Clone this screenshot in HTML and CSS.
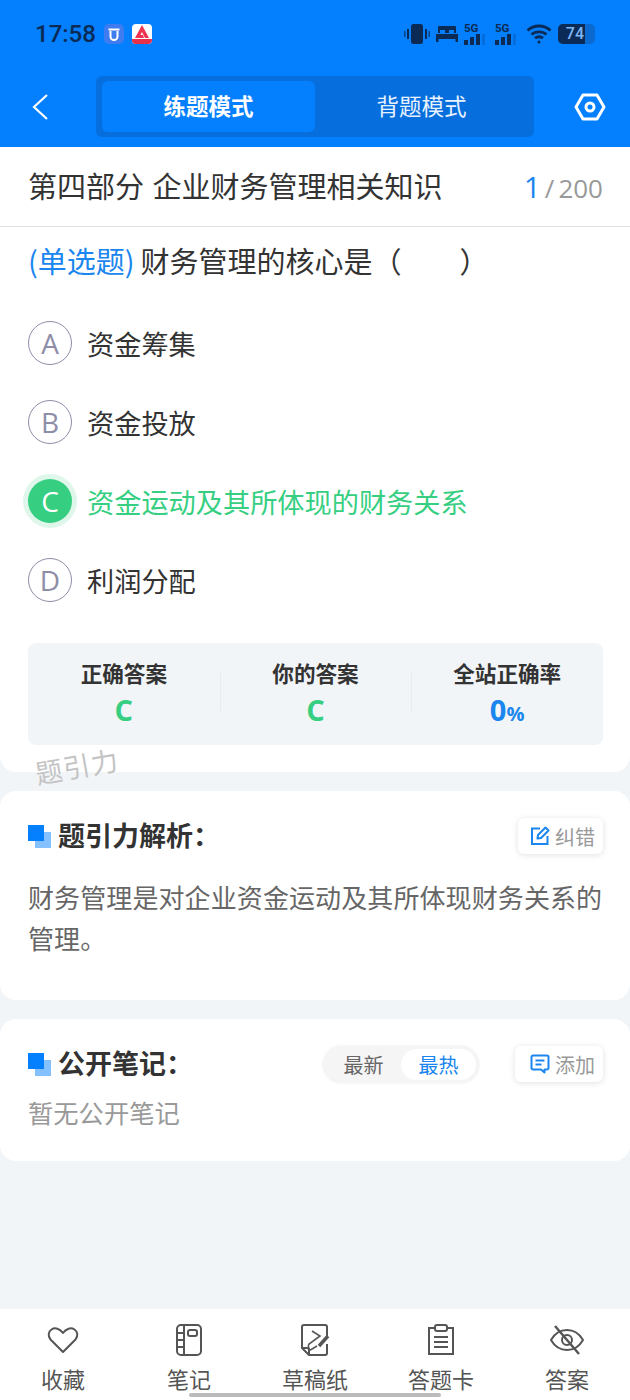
FILE: index.html
```html
<!DOCTYPE html>
<html lang="zh-CN">
<head>
  <meta charset="UTF-8">
  <meta name="viewport" content="width=device-width, initial-scale=1.0">
  <title>练题模式</title>
  <link rel="stylesheet" href="styles.css">
</head>
<body>
<div class="page">
  <!-- Status bar + mode switch -->
  <header class="top">
    <div class="status">
      <span class="time">17:58</span>
      <svg class="app-icon" width="20" height="20" viewBox="0 0 20 20"><rect width="20" height="20" rx="5" fill="#3f7cf0"/><path d="M6.500 7v5.500a3.500 3.500 0 0 0 7 0V7M4.500 5.500h11" fill="none" stroke="#fff" stroke-width="2"/></svg>
      <svg class="app-icon" width="20" height="20" viewBox="0 0 20 20"><rect width="20" height="20" rx="4" fill="#fff"/><path d="M0 15h20v1a4 4 0 0 1-4 4H4a4 4 0 0 1-4-4z" fill="#e8304a"/><path d="M3 14 10 1l7 13h-4l-3-6-1.500 3H11l1 3z" fill="#ee3450"/></svg>
      <div class="status-right">
        <svg width="26" height="20" viewBox="0 0 26 20" fill="#0b2a55"><rect x="7" y="0" width="12" height="20" rx="2.500"/><rect x="3" y="5" width="2" height="10"/><rect x="0" y="7" width="1.500" height="6" opacity=".7"/><rect x="21" y="5" width="2" height="10"/><rect x="24.500" y="7" width="1.500" height="6" opacity=".7"/></svg>
        <svg width="22" height="18" viewBox="0 0 22 18" fill="#0b2a55"><path d="M3 1h16a1 1 0 0 1 1 1v6h-2V5h-5v3H9V5H4v3H2V2a1 1 0 0 1 1-1zM0 9h22v8h-2.500v-3h-17v3H0z"/></svg>
        <div class="signal">
          <span class="net">5G</span>
          <svg width="24" height="11" viewBox="0 0 24 11"><rect x="0" y="6" width="4" height="5" fill="#0b2a55"/><rect x="6" y="3" width="4" height="8" fill="#0b2a55"/><rect x="12" y="0" width="4" height="11" fill="#0b2a55"/><rect x="18" y="0" width="3" height="11" fill="#0b2a55" opacity=".2"/></svg>
        </div>
        <div class="signal">
          <span class="net">5G</span>
          <svg width="24" height="11" viewBox="0 0 24 11"><rect x="0" y="6" width="4" height="5" fill="#0b2a55"/><rect x="6" y="3" width="4" height="8" fill="#0b2a55"/><rect x="12" y="0" width="4" height="11" fill="#0b2a55"/><rect x="18" y="0" width="3" height="11" fill="#0b2a55" opacity=".2"/></svg>
        </div>
        <svg width="26" height="20" viewBox="0 0 26 20" fill="none" stroke="#0b2a55" stroke-width="2.800"><path d="M1.500 6.500c6.500-6 16.500-6 23 0M5.500 10.500c4-3.500 11-3.500 15 0M9 14.200c2.300-1.700 5.700-1.700 8 0"/><circle cx="13" cy="18" r="1.500" fill="#0b2a55" stroke="none"/></svg>
        <div class="battery"><span class="battery-fill">74</span></div>
      </div>
    </div>
    <div class="nav">
      <svg class="back" width="16" height="28" viewBox="0 0 16 28" fill="none" stroke="#fff" stroke-width="2.200"><path d="M15 2 2 14l13 12"/></svg>
      <div class="modes">
        <div class="mode mode-on">练题模式</div>
        <div class="mode">背题模式</div>
      </div>
      <svg class="gear" width="32" height="28" viewBox="0 0 32 28" fill="none" stroke="#fff" stroke-width="3"><path d="M9 2h14l7 12-7 12H9L2 14z" stroke-linejoin="round"/><circle cx="16" cy="14" r="4"/></svg>
    </div>
  </header>

  <!-- Question card -->
  <section class="card question">
    <div class="part-row">
      <span class="part">第四部分 企业财务管理相关知识</span>
      <span class="count"><b>1</b><i>/</i>200</span>
    </div>
    <div class="stem"><span class="tag">(单选题)</span>财务管理的核心是（　　）</div>
    <div class="option"><span class="letter">A</span>资金筹集</div>
    <div class="option"><span class="letter">B</span>资金投放</div>
    <div class="option option-right"><span class="letter">C</span>资金运动及其所体现的财务关系</div>
    <div class="option"><span class="letter">D</span>利润分配</div>
    <div class="result">
      <div class="result-col"><div class="result-title">正确答案</div><div class="result-val green">C</div></div>
      <div class="result-col"><div class="result-title">你的答案</div><div class="result-val green">C</div></div>
      <div class="result-col"><div class="result-title">全站正确率</div><div class="result-val blue">0<small>%</small></div></div>
    </div>
    <div class="watermark">题引力</div>
  </section>

  <!-- Analysis -->
  <section class="card analysis">
    <div class="card-head">
      <span class="square"></span>
      <h2>题引力解析：</h2>
      <div class="chip">
        <svg width="20" height="20" viewBox="0 0 20 20" fill="none" stroke="#1a86ee" stroke-width="2"><path d="M10 2.500H2v15.500h15.500V10"/><path d="M7.500 12.500l.5-3.500L15.500 1.500l3 3L11 12z" stroke-linejoin="round"/></svg>
        纠错
      </div>
    </div>
    <p class="analysis-text">财务管理是对企业资金运动及其所体现财务关系的管理。</p>
  </section>

  <!-- Notes -->
  <section class="card notes">
    <div class="card-head">
      <span class="square"></span>
      <h2>公开笔记：</h2>
      <div class="sorter"><span class="sort">最新</span><span class="sort sort-on">最热</span></div>
      <div class="chip chip-add">
        <svg width="20" height="20" viewBox="0 0 20 20" fill="none" stroke="#1a86ee" stroke-width="2"><path d="M3 1.500h14a1.500 1.500 0 0 1 1.500 1.500v11a1.500 1.500 0 0 1-1.500 1.500h-2.500v3l-3.500-3H3A1.500 1.500 0 0 1 1.500 14V3A1.500 1.500 0 0 1 3 1.500z" stroke-linejoin="round"/><path d="M5.500 6.500h9M5.500 10.500h6"/></svg>
        添加
      </div>
    </div>
    <div class="empty">暂无公开笔记</div>
  </section>

  <!-- Bottom bar -->
  <footer class="tabs">
    <div class="tab">
      <svg width="32" height="30" viewBox="0 0 32 30" fill="none" stroke="#555" stroke-width="2"><path d="M16 27 3.500 14.500C.5 11 1.500 6.500 4.500 4.500c3.500-2.300 8.500-1 11.500 3.500 3-4.500 8-5.800 11.500-3.500 3 2 4 6.500 1 10z" stroke-linejoin="round"/></svg>
      <span>收藏</span>
    </div>
    <div class="tab">
      <svg width="32" height="32" viewBox="0 0 32 32" fill="none" stroke="#555" stroke-width="2"><rect x="4" y="1" width="24" height="30" rx="4"/><path d="M11 1v30M4 9h7M4 16h7M4 23h7"/><rect x="15" y="6" width="9" height="6" rx="2"/></svg>
      <span>笔记</span>
    </div>
    <div class="tab">
      <svg width="32" height="32" viewBox="0 0 32 32" fill="none" stroke="#555" stroke-width="2"><path d="M28 12V3a2 2 0 0 0-2-2H5a2 2 0 0 0-2 2v21l7 7h16a2 2 0 0 0 2-2V20M3 24h5a2 2 0 0 1 2 2v5" stroke-linejoin="round"/><path d="M13 7l8 5-11 8c-1.500 2 0 6 1.500 6l6.500-4" stroke-width="1.600"/><path d="M20 22l9-10" stroke-width="3.400"/></svg>
      <span>草稿纸</span>
    </div>
    <div class="tab">
      <svg width="32" height="32" viewBox="0 0 32 32" fill="none" stroke="#555" stroke-width="2"><path d="M10 4H4v26h24V4h-6"/><rect x="10" y="1" width="12" height="6" rx="2"/><path d="M9 13h14M9 18h14M9 23h14"/></svg>
      <span>答题卡</span>
    </div>
    <div class="tab">
      <svg width="36" height="32" viewBox="0 0 36 32" fill="none" stroke="#555" stroke-width="2"><path d="M2 16C6 9 11 6 18 6s12 3 16 10c-4 7-9 10-16 10S6 23 2 16z" stroke-linejoin="round"/><circle cx="18" cy="16" r="5"/><path d="M6 2l24 28" stroke-width="2.400"/></svg>
      <span>答案</span>
    </div>
    <div class="home-bar"></div>
  </footer>
</div>
</body>
</html>
```

FILE: styles.css
```css
* {
  box-sizing: border-box;
}

body {
  margin: 0;
  background: #f2f5f8;
  font-family: "Noto Sans CJK SC", "Noto Sans", sans-serif;
  color: #333;
}

.page {
  width: 630px;
  height: 1400px;
  position: relative;
  overflow: hidden;
  display: flex;
  flex-direction: column;
}

/* top blue area */
.top {
  height: 147px;
  background: #047ffd;
  flex-shrink: 0;
}

.status {
  height: 68px;
  display: flex;
  align-items: center;
  padding: 0 35px;
}

.time {
  font-family: Roboto, sans-serif;
  font-size: 24px;
  font-weight: 500;
  color: #0b2a55;
  margin-right: 8px;
}

.app-icon {
  margin-right: 8px;
}

.status-right {
  margin-left: auto;
  display: flex;
  align-items: center;
  gap: 6px;
}

.signal {
  display: flex;
  flex-direction: column;
  width: 25px;
  line-height: 1;
}

.net {
  font-family: Roboto, sans-serif;
  font-size: 11.500px;
  font-weight: 700;
  color: #0b2a55;
  line-height: 11px;
}

.battery {
  width: 37px;
  height: 20px;
  border-radius: 5px;
  background: #0a6ad0;
  overflow: hidden;
}

.battery-fill {
  display: block;
  width: 27px;
  height: 20px;
  background: #0b2a55;
  color: #7db6f5;
  font-family: Roboto, sans-serif;
  font-size: 16px;
  font-weight: 500;
  line-height: 20px;
  text-align: right;
  padding-right: 1px;
}

.nav {
  height: 79px;
  display: flex;
  align-items: flex-start;
  padding: 8px 24px 0 32px;
}

.back {
  margin-top: 17px;
}

.modes {
  width: 438px;
  height: 61px;
  margin-left: 48px;
  padding: 5px 6px;
  display: flex;
  background: #066fdd;
  border-radius: 6px;
}

.mode {
  flex: 1;
  border-radius: 6px;
  color: #e8f2ff;
  font-size: 22.500px;
  text-align: center;
  line-height: 48px;
}

.mode-on {
  background: #047ffd;
  color: #fff;
  font-weight: 700;
}

.gear {
  margin: 17px 0 0 40px;
}

/* cards */
.card {
  background: #fff;
  border-radius: 16px;
  position: relative;
}

.question {
  height: 625px;
  border-radius: 0 0 16px 16px;
}

.part-row {
  height: 80px;
  padding: 0 27px 0 28px;
  display: flex;
  align-items: center;
  justify-content: space-between;
  border-bottom: 1px solid #e2e2e2;
}

.part {
  font-size: 29px;
  line-height: 40px;
  margin-bottom: 4px;
  word-spacing: 2px;
  color: #333;
}

.count {
  font-family: "Open Sans", sans-serif;
  font-size: 26px;
  color: #999;
}

.count b {
  font-size: 30px;
  font-weight: 400;
  color: #1a86ee;
}

.count i {
  font-style: normal;
  margin: 0 4px;
}

.stem {
  font-size: 29px;
  line-height: 40px;
  padding: 13px 28px 0;
  height: 76px;
}

.tag {
  color: #1a86ee;
  margin-right: 6px;
}

.option {
  height: 79.200px;
  padding-left: 28px;
  display: flex;
  align-items: center;
  font-size: 27.200px;
  color: #333;
}

.letter {
  width: 44px;
  height: 44px;
  margin-right: 15px;
  border: 1.800px solid #8e8ea8;
  border-radius: 50%;
  display: flex;
  align-items: center;
  justify-content: center;
  font-family: "Open Sans", sans-serif;
  font-size: 28px;
  color: #8e8ea8;
}

.option-right {
  color: #36cf82;
}

.option-right .letter {
  background: #36cf82;
  border: none;
  color: #fff;
  box-shadow: 0 0 0 5px #dff7ea;
}

.result {
  margin: 23px 27px 0 28px;
  height: 102px;
  background: #f2f5f8;
  border-radius: 8px;
  display: flex;
  padding-top: 16px;
}

.result-col {
  flex: 1;
  text-align: center;
  position: relative;
}

.result-col + .result-col::before {
  content: "";
  position: absolute;
  left: 0;
  top: 14px;
  height: 38px;
  border-left: 1px solid #e8ecf0;
}

.result-title {
  font-size: 21.600px;
  font-weight: 700;
  line-height: 28px;
  color: #333;
}

.result-val {
  margin-top: 4px;
  font-family: "Open Sans", sans-serif;
  font-size: 29px;
  font-weight: 700;
  line-height: 38px;
}

.result-val small {
  font-size: 20px;
}

.green {
  color: #36cf82;
}

.blue {
  color: #1a86ee;
}

.watermark {
  position: absolute;
  left: 35px;
  top: 601px;
  font-size: 27px;
  line-height: 36px;
  letter-spacing: 1px;
  color: #c4c4c4;
  transform: rotate(-10deg);
}

.analysis {
  height: 209px;
  margin-top: 19px;
  padding: 27px 27px 0 28px;
}

.notes {
  height: 142px;
  margin-top: 19px;
  padding: 27px 27px 0 28px;
}

.card-head {
  display: flex;
  align-items: center;
  height: 36px;
}

.card-head h2 {
  margin: 0 0 0 7px;
  font-size: 27px;
  line-height: 33px;
  font-weight: 700;
  color: #333;
  align-self: flex-start;
}

.square {
  width: 23px;
  height: 23px;
  display: block;
  position: relative;
  background: linear-gradient(#047ffd, #047ffd) 0 0 / 16px 16px no-repeat,
              linear-gradient(#85c1fe, #85c1fe) 7px 7px / 16px 16px no-repeat;
}

.chip {
  margin-left: auto;
  height: 36px;
  padding: 0 8px 0 12px;
  display: flex;
  align-items: center;
  gap: 5px;
  background: #fff;
  border-radius: 6px;
  box-shadow: 0 1px 6px rgba(0, 0, 0, .12);
  font-size: 20px;
  color: #999;
}

.chip-add {
  margin-left: 36px;
  padding-left: 15px;
}

.analysis-text {
  margin: 22px 0 0;
  font-size: 26px;
  line-height: 41px;
  letter-spacing: .1px;
  color: #666;
}

.sorter {
  margin-left: auto;
  width: 156px;
  height: 37px;
  padding: 3px;
  display: flex;
  background: #f5f5f5;
  border-radius: 19px;
  box-shadow: 0 0 3px rgba(0, 0, 0, .08);
}

.sort {
  flex: 1;
  text-align: center;
  font-size: 20px;
  line-height: 31px;
  color: #666;
}

.sort-on {
  background: #fff;
  border-radius: 16px;
  color: #1a86ee;
}

.empty {
  margin-top: 12px;
  font-size: 25.300px;
  line-height: 36px;
  color: #999;
}

/* bottom tabs */
.tabs {
  margin-top: auto;
  height: 91px;
  background: #fff;
  padding-top: 15px;
  display: flex;
  position: relative;
}

.tab {
  flex: 1;
  display: flex;
  flex-direction: column;
  align-items: center;
  font-size: 22px;
  color: #555;
}

.tab svg {
  height: 32px;
  flex-shrink: 0;
}

.tab span {
  line-height: 30px;
  margin-top: 7px;
}

.home-bar {
  position: absolute;
  left: 189px;
  bottom: 3px;
  width: 252px;
  height: 4px;
  border-radius: 2px;
  background: #bbb;
}
```
